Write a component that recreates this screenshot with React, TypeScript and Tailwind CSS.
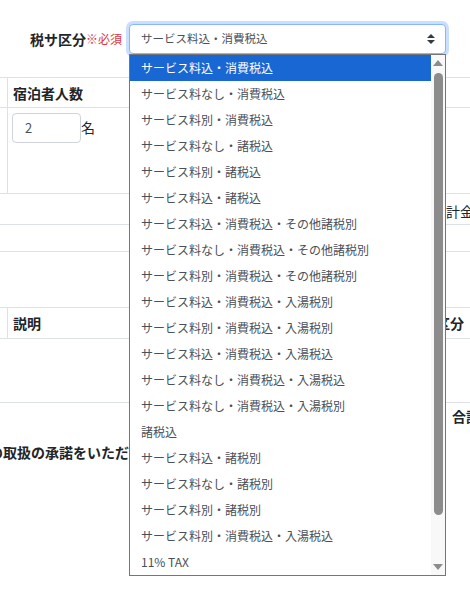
import React from "react";

const options = [
  "サービス料込・消費税込",
  "サービス料なし・消費税込",
  "サービス料別・消費税込",
  "サービス料なし・諸税込",
  "サービス料別・諸税込",
  "サービス料込・諸税込",
  "サービス料込・消費税込・その他諸税別",
  "サービス料なし・消費税込・その他諸税別",
  "サービス料別・消費税込・その他諸税別",
  "サービス料込・消費税込・入湯税別",
  "サービス料別・消費税込・入湯税別",
  "サービス料込・消費税込・入湯税込",
  "サービス料なし・消費税込・入湯税込",
  "サービス料なし・消費税込・入湯税別",
  "諸税込",
  "サービス料込・諸税別",
  "サービス料なし・諸税別",
  "サービス料別・諸税別",
  "サービス料別・消費税込・入湯税込",
  "11% TAX",
];

export default function App() {
  return (
    <div
      className="relative w-[470px] h-[598px] overflow-hidden bg-white text-[#212529]"
      style={{ fontFamily: '"Noto Sans CJK JP", "Noto Sans", sans-serif' }}
    >
      {/* top form row */}
      <div className="h-[77px] flex items-start pt-[24px]">
        <div className="w-[129px] shrink-0 h-[30px] flex items-center justify-end pr-[7px] whitespace-nowrap">
          <span className="text-[14px] font-bold leading-none">税サ区分</span>
          <span className="text-[12px] leading-none text-[#dc3545]">※必須</span>
        </div>
        <div className="w-[317px] shrink-0 h-[30px] flex items-center justify-between pl-[11px] pr-[10px] border border-[#86b7fe] rounded-[4px] shadow-[0_0_0_3px_rgba(13,110,253,0.22)] bg-white">
          <span className="text-[11.5px] text-[#495057] leading-none">サービス料込・消費税込</span>
          <svg width="8" height="10" viewBox="0 0 4 5">
            <path d="M2 0L0 2h4zm0 5L0 3h4z" fill="#343a40" />
          </svg>
        </div>
      </div>

      {/* table section 1 */}
      <div className="h-[30px] border-t border-[#dee2e6] flex">
        <div className="w-[8px] shrink-0 border-r border-[#dee2e6]" />
        <div className="flex items-center pl-[5px] text-[14px] font-bold leading-none">宿泊者人数</div>
      </div>
      <div className="h-[86px] border-t border-[#dee2e6] flex">
        <div className="w-[8px] shrink-0 border-r border-[#dee2e6]" />
        <div className="flex items-start pt-[5px] pl-[4px]">
          <div className="w-[69px] h-[30px] border border-[#ced4da] rounded-[4px] flex items-center pl-[12px] text-[13px] text-[#495057]">
            2
          </div>
          <span className="text-[14px] mt-[7px] leading-none">名</span>
        </div>
      </div>
      <div className="h-[31px] border-t border-[#dee2e6] flex items-center pt-[3px]">
        <div className="w-[446px] shrink-0" />
        <span className="text-[14px] whitespace-nowrap leading-none">計金額</span>
      </div>
      <div className="h-[27px] border-t border-[#dee2e6]" />
      <div className="h-[56px] border-t border-[#dee2e6]" />
      <div className="h-[31px] border-t border-[#dee2e6] flex">
        <div className="w-[8px] shrink-0 border-r border-[#dee2e6]" />
        <div className="w-[428px] shrink-0 flex items-center pl-[5px] text-[14px] font-bold leading-none">説明</div>
        <div className="flex items-center text-[14px] font-bold whitespace-nowrap leading-none">区分</div>
      </div>
      <div className="h-[64px] border-t border-[#dee2e6]" />
      <div className="border-t border-[#dee2e6] flex pt-[4px]">
        <div className="w-[452px] shrink-0" />
        <span className="text-[14px] font-bold whitespace-nowrap leading-[18px]">合計金額</span>
      </div>
      <div className="mt-[18px] ml-[-11px] text-[14px] font-bold whitespace-nowrap leading-[18px]">
        の取扱の承諾をいただいた上で
      </div>

      {/* open dropdown list */}
      <div className="absolute left-[129px] top-[54px] w-[317px] h-[522px] border border-[#767676] bg-white flex z-10">
        <div className="w-[301px] shrink-0 flex flex-col">
          {options.map((o, i) => (
            <div
              key={i}
              className={
                "h-[26px] shrink-0 flex items-center pl-[11px] text-[12px] leading-none whitespace-nowrap " +
                (i === 0 ? "bg-[#1967d2] text-white" : "text-[#495057]")
              }
            >
              {o}
            </div>
          ))}
        </div>
        <div className="flex-1 bg-[#f8f8f8] flex flex-col items-center">
          <svg className="mt-[5px] shrink-0" width="10" height="6" viewBox="0 0 10 6">
            <path d="M5 0L10 6H0z" fill="#8c8c8c" />
          </svg>
          <div className="mt-[7px] w-[9px] h-[442px] shrink-0 rounded-full bg-[#8c8c8c]" />
          <div className="flex-1" />
          <svg className="mb-[5px] shrink-0" width="10" height="6" viewBox="0 0 10 6">
            <path d="M0 0H10L5 6z" fill="#8c8c8c" />
          </svg>
        </div>
      </div>
    </div>
  );
}
